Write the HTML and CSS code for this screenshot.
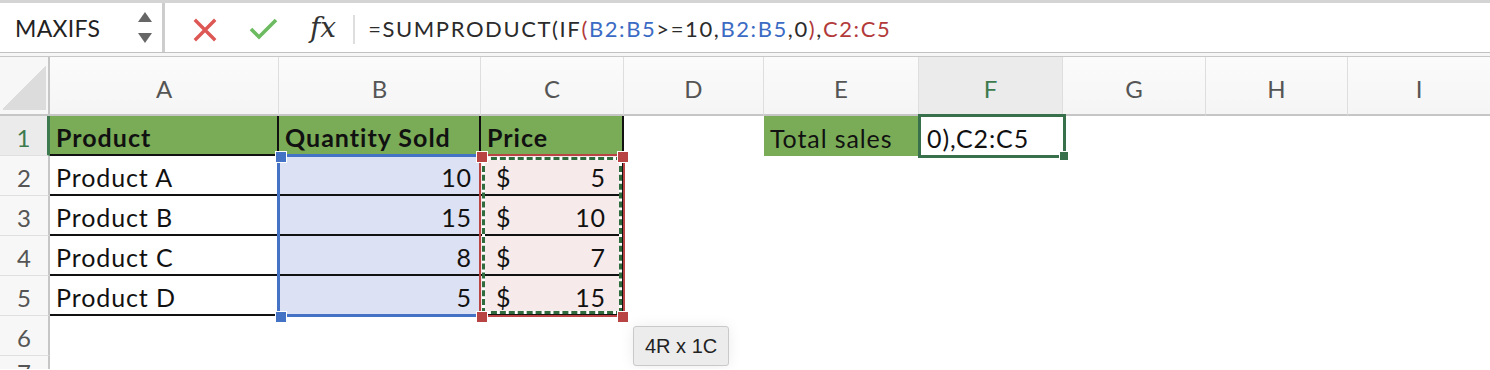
FILE: index.html
```html
<!DOCTYPE html>
<html lang="en-us">
  <head>
    <meta charset="utf-8" />
    <title>MAXIFS - SUMPRODUCT</title>
    <link rel="stylesheet" href="styles.css">
  </head>
  <body>
    <div class="formula-bar">
      <div class="name-box">
        <span>MAXIFS</span>
        <div class="spinner">
          <svg width="14" height="32" viewBox="0 0 14 32">
            <path d="M7 0 L14 10 L0 10 Z" fill="#666" />
            <path d="M0 21 L14 21 L7 31 Z" fill="#666" />
          </svg>
        </div>
      </div>
      <div class="bar-buttons">
        <svg class="btn-x" width="24" height="24" viewBox="0 0 24 24">
          <path d="M3 3 L21 21 M21 3 L3 21" stroke="#dd5755" stroke-width="3.4" stroke-linecap="square" fill="none" />
        </svg>
        <svg class="btn-ok" width="30" height="22" viewBox="0 0 30 22">
          <path d="M2 11 L10 19 L27 2" stroke="#6cbb60" stroke-width="3.6" fill="none" />
        </svg>
        <span class="fx">fx</span>
      </div>
      <div class="bar-sep"></div>
      <div class="formula">=SUMPRODUCT(IF<span class="ref-red">(</span><span class="ref-blue">B2:B5</span>&gt;=10,<span class="ref-blue">B2:B5</span>,0<span class="ref-red">)</span>,<span class="ref-red">C2:C5</span></div>
    </div>
    <div class="bar-gap"></div>

    <div class="sheet">
      <div class="corner"></div>
      <div class="hd">A</div>
      <div class="hd">B</div>
      <div class="hd">C</div>
      <div class="hd">D</div>
      <div class="hd">E</div>
      <div class="hd hd-sel">F</div>
      <div class="hd">G</div>
      <div class="hd">H</div>
      <div class="hd last">I</div>

      <div class="rh rh-sel">1</div>
      <div class="c t head">Product</div>
      <div class="c t head">Quantity Sold</div>
      <div class="c t head">Price</div>
      <div class="c"></div>
      <div class="c label">Total sales</div>
      <div class="c edit">0),C2:C5</div>
      <div class="c"></div>
      <div class="c"></div>
      <div class="c"></div>

      <div class="rh">2</div>
      <div class="c t">Product A</div>
      <div class="c t qty">10</div>
      <div class="c t price"><span>$</span><span>5</span></div>
      <div class="c"></div><div class="c"></div><div class="c"></div><div class="c"></div><div class="c"></div><div class="c"></div>

      <div class="rh">3</div>
      <div class="c t">Product B</div>
      <div class="c t qty">15</div>
      <div class="c t price"><span>$</span><span>10</span></div>
      <div class="c"></div><div class="c"></div><div class="c"></div><div class="c"></div><div class="c"></div><div class="c"></div>

      <div class="rh">4</div>
      <div class="c t">Product C</div>
      <div class="c t qty">8</div>
      <div class="c t price"><span>$</span><span>7</span></div>
      <div class="c"></div><div class="c"></div><div class="c"></div><div class="c"></div><div class="c"></div><div class="c"></div>

      <div class="rh">5</div>
      <div class="c t">Product D</div>
      <div class="c t qty">5</div>
      <div class="c t price"><span>$</span><span>15</span></div>
      <div class="c"></div><div class="c"></div><div class="c"></div><div class="c"></div><div class="c"></div><div class="c"></div>

      <div class="rh">6</div>
      <div class="c"></div><div class="c"></div><div class="c"></div><div class="c"></div><div class="c"></div><div class="c"></div><div class="c"></div><div class="c"></div><div class="c"></div>

      <div class="rh rh-cut">7</div>
      <div class="c"></div><div class="c"></div><div class="c"></div><div class="c"></div><div class="c"></div><div class="c"></div><div class="c"></div><div class="c"></div><div class="c"></div>

      <!-- reference highlights drawn over the cells -->
      <div class="range-blue"></div>
      <div class="range-red"><div class="ants"></div></div>
      <div class="handle blue" style="left:275px; top:94px"></div>
      <div class="handle blue" style="left:275px; top:254px"></div>
      <div class="handle red" style="left:476px; top:94px"></div>
      <div class="handle red" style="left:617px; top:94px"></div>
      <div class="handle red" style="left:476px; top:254px"></div>
      <div class="handle red" style="left:617px; top:254px"></div>
      <div class="active-cell"></div>
      <div class="fill-handle"></div>
      <div class="tip">4R x 1C</div>
    </div>
  </body>
</html>
```

FILE: styles.css
```css
body {
  margin: 0;
  background-color: #fff;
  font-family: Lato, "Open Sans", sans-serif;
  color: #111;
  overflow: hidden;
}

/* formula bar */
.formula-bar {
  display: flex;
  align-items: stretch;
  height: 49px;
  border-top: 3px solid #d4d4d4;
  border-bottom: 1px solid #c2c2c2;
}

.name-box {
  box-sizing: border-box;
  width: 165px;
  display: flex;
  align-items: center;
  justify-content: space-between;
  padding: 0 10px 0 15px;
  border-right: 3px solid #cdcdcd;
  font-size: 23px;
  letter-spacing: 0.3px;
  color: #222;
}

.spinner {
  display: flex;
  padding-top: 1px;
}

.bar-buttons {
  display: flex;
  align-items: center;
  padding-left: 28px;
}

.btn-x {
  margin-top: 4px;
}

.btn-ok {
  margin-left: 32px;
  margin-top: 2px;
}

.fx {
  margin-left: 31px;
  font-family: "DejaVu Serif", "Liberation Serif", serif;
  font-style: italic;
  font-size: 28px;
  color: #333;
}

.bar-sep {
  width: 2px;
  margin: 12px 0 8px 17px;
  background-color: #dedede;
}

.formula {
  display: flex;
  align-items: center;
  padding: 2px 0 0 13px;
  font-size: 22px;
  letter-spacing: 1.6px;
  color: #2b2b2b;
  white-space: pre;
}

.ref-blue {
  color: #3b6bc4;
}

.ref-red {
  color: #b23a3a;
}

.bar-gap {
  height: 3px;
  background-color: #f6f6f6;
  border-bottom: 1px solid #c8c8c8;
}

/* grid */
.sheet {
  position: relative;
  display: grid;
  grid-template-columns: 50px 229px 202px 143px 140px 155px 144px 143px 142px 142px;
  grid-template-rows: 59px repeat(6, 40px) 13px;
  overflow: hidden;
}

.corner {
  box-sizing: border-box;
  border-right: 2px solid #c6c6c6;
  border-bottom: 2px solid #c6c6c6;
  background: linear-gradient(135deg, #f7f7f7 50%, #dcdcdc 50%);
  background-size: 43px 45px;
  background-position: 3px 8px;
  background-repeat: no-repeat;
  background-color: #f7f7f7;
}

.hd {
  box-sizing: border-box;
  display: flex;
  align-items: center;
  justify-content: center;
  padding-top: 6px;
  border-right: 1px solid #dedede;
  border-bottom: 2px solid #c6c6c6;
  background: linear-gradient(#fbfbfb, #f5f5f5);
  font-size: 24px;
  color: #555;
}

.hd.last {
  border-right: none;
}

.hd-sel {
  background: #ebebeb;
  color: #3d7a4e;
}

.rh {
  box-sizing: border-box;
  display: flex;
  align-items: center;
  justify-content: center;
  padding-top: 4px;
  border-right: 2px solid #c6c6c6;
  border-bottom: 1px solid #e0e0e0;
  background-color: #f7f7f7;
  font-size: 24px;
  color: #555;
}

.rh-sel {
  background-color: #ebebeb;
  color: #3d7a4e;
  border-right: 3px solid #3d7a4e;
}

.rh-cut {
  align-items: flex-start;
  padding-top: 5px;
  border-bottom: none;
  line-height: 1;
  overflow: hidden;
}

.c {
  box-sizing: border-box;
  display: flex;
  align-items: center;
  padding: 4px 7px 0 6px;
  font-size: 25px;
  letter-spacing: 0.9px;
  white-space: nowrap;
}

.t {
  border-right: 2px solid #111;
  border-bottom: 2px solid #111;
}

.head {
  background-color: #7aab57;
  font-weight: bold;
  letter-spacing: 1px;
}

.label {
  background-color: #7aab57;
}

.qty {
  justify-content: flex-end;
  background-color: #dce2f3;
}

.price {
  justify-content: space-between;
  padding-left: 15px;
  padding-right: 16px;
  background-color: #f6eaea;
}

.edit {
  padding-left: 8px;
}

/* overlays */
.range-blue {
  position: absolute;
  left: 277px;
  top: 97px;
  width: 204px;
  height: 163px;
  box-sizing: border-box;
  border: 3px solid #4472c4;
  border-right: none;
}

.range-red {
  position: absolute;
  left: 479px;
  top: 97px;
  width: 146px;
  height: 163px;
  box-sizing: border-box;
  border: 2px solid #b94444;
}

.ants {
  position: absolute;
  inset: 1px;
  border: 3px solid #fff;
}

.ants::after {
  content: "";
  position: absolute;
  inset: -3px;
  border: 3px dashed #2f6b3d;
}

.handle {
  position: absolute;
  width: 10px;
  height: 10px;
  border: 1px solid #fff;
}

.handle.blue {
  background-color: #4472c4;
}

.handle.red {
  background-color: #b94444;
}

.active-cell {
  position: absolute;
  left: 918px;
  top: 57px;
  width: 148px;
  height: 44px;
  box-sizing: border-box;
  border: 3px solid #37704a;
}

.fill-handle {
  position: absolute;
  left: 1059px;
  top: 94px;
  width: 8px;
  height: 8px;
  background-color: #37704a;
  border: 1px solid #fff;
}

.tip {
  position: absolute;
  left: 633px;
  top: 269px;
  padding: 8px 11px 7px;
  border: 1px solid #c9c9c9;
  border-radius: 3px;
  background-color: #ececec;
  box-shadow: 0 0 14px rgba(0, 0, 0, 0.08);
  font-family: "Liberation Sans", Arial, sans-serif;
  font-size: 20px;
  color: #222;
}
```
